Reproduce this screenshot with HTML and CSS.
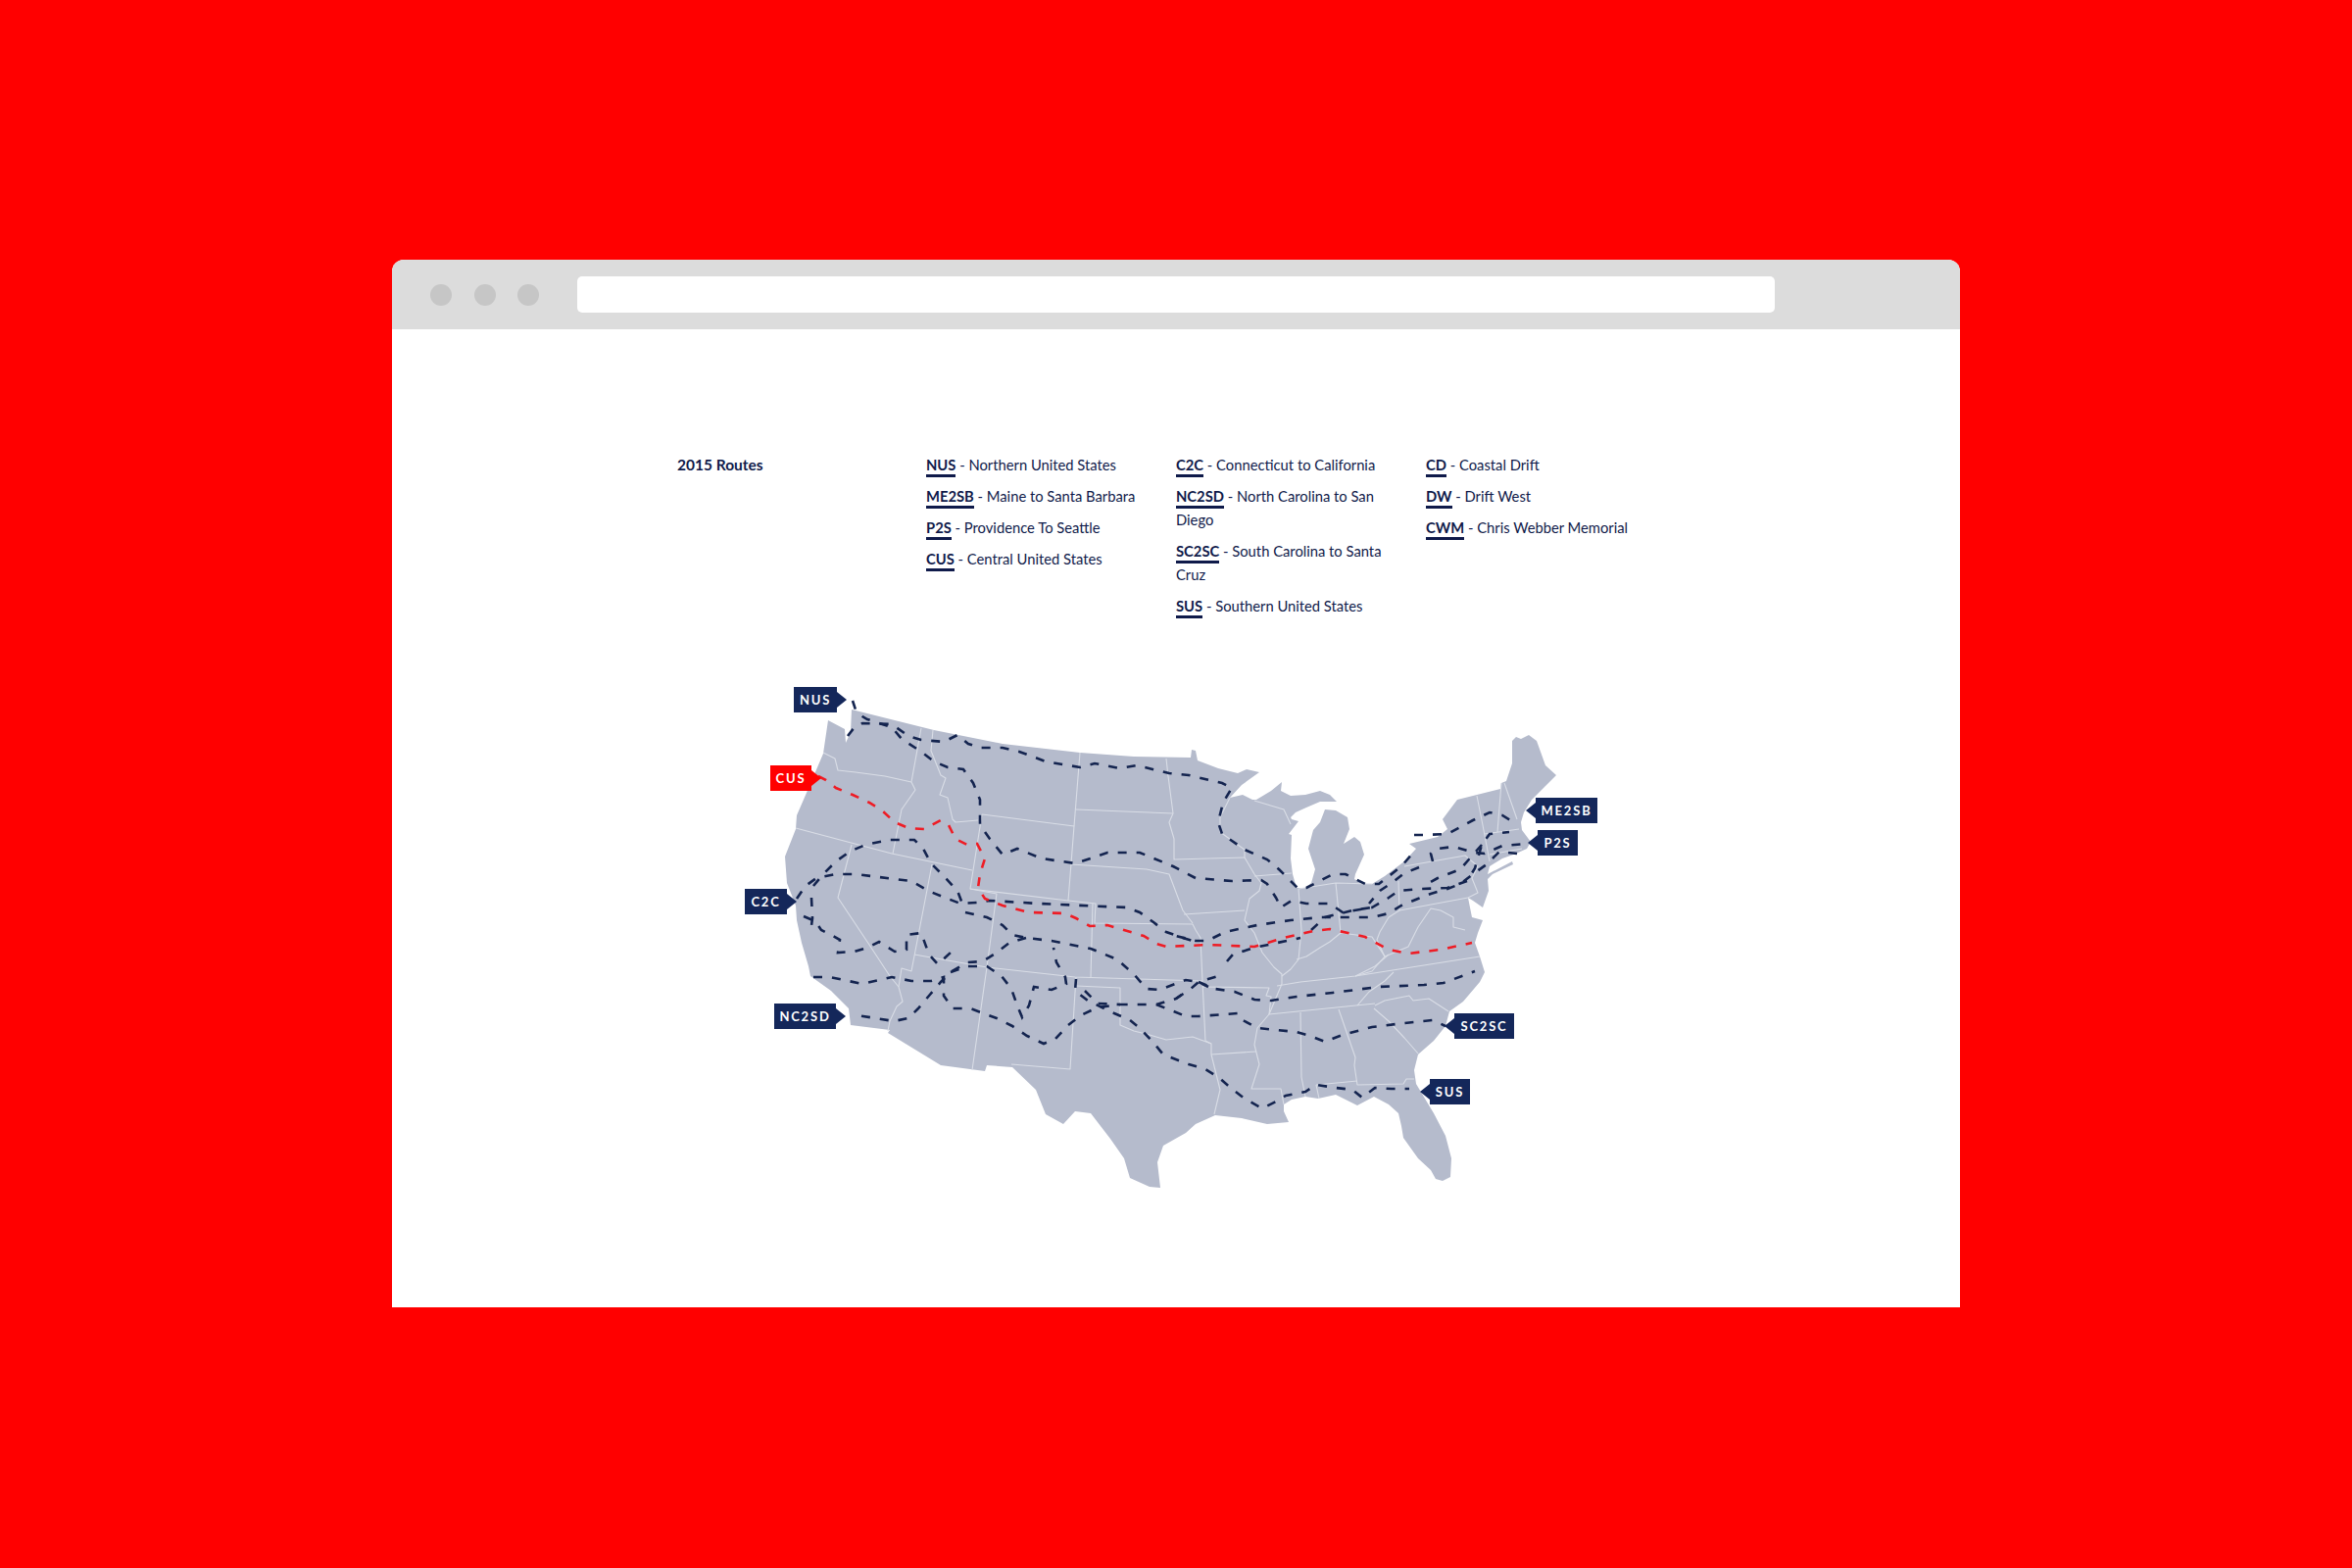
FILE: index.html
```html
<!DOCTYPE html>
<html lang="en">
<head>
    <meta charset="UTF-8">
    <meta name="viewport" content="width=device-width, initial-scale=1.0">
    <title>2015 Routes</title>
    <link rel="stylesheet" href="styles.css">
</head>
<body>

<div class="browser">
    <!-- Window toolbar -->
    <div class="toolbar">
        <div class="dots">
            <span class="dot"></span>
            <span class="dot"></span>
            <span class="dot"></span>
        </div>
        <div class="address-bar"></div>
    </div>

    <div class="page">
        <!-- Route legend -->
        <div class="legend">
            <h2 class="legend-title">2015 Routes</h2>
            <ul class="route-list">
                <li><b>NUS</b> - Northern United States</li>
                <li><b>ME2SB</b> - Maine to Santa Barbara</li>
                <li><b>P2S</b> - Providence To Seattle</li>
                <li><b>CUS</b> - Central United States</li>
            </ul>
            <ul class="route-list">
                <li><b>C2C</b> - Connecticut to California</li>
                <li><b>NC2SD</b> - North Carolina to San Diego</li>
                <li><b>SC2SC</b> - South Carolina to Santa Cruz</li>
                <li><b>SUS</b> - Southern United States</li>
            </ul>
            <ul class="route-list">
                <li><b>CD</b> - Coastal Drift</li>
                <li><b>DW</b> - Drift West</li>
                <li><b>CWM</b> - Chris Webber Memorial</li>
            </ul>
        </div>

        <!-- Map, coordinates are the ones of the full picture -->
        <div class="map">
            <svg class="map-svg" viewBox="740 690 920 550" width="920" height="550">
                <path class="land" d="M869 725 L953 746 L1023 760 L1102 769 L1157 773 L1215 774 L1216 766 L1220 767 L1222 777 L1243 785 L1263 790 L1272 786 L1285 789 L1267 802 L1255 815 L1268 812 L1278 817 L1282 817 L1297 808 L1308 799 L1307 808 L1317 813 L1332 812 L1347 808 L1357 812 L1364 819 L1347 819 L1333 825 L1322 830 L1317 835 L1318 837 L1325 839 L1315 852 L1318 853 L1317 877 L1319 893 L1323 907 L1332 907 L1338 902 L1342 888 L1335 867 L1340 848 L1347 840 L1352 827 L1363 828 L1375 835 L1377 847 L1371 862 L1382 855 L1388 860 L1392 873 L1383 893 L1382 898 L1392 903 L1400 903 L1413 895 L1433 880 L1445 867 L1438 862 L1467 855 L1477 847 L1472 837 L1487 817 L1507 812 L1531 806 L1532 800 L1537 798 L1543 780 L1543 757 L1547 753 L1552 755 L1560 751 L1568 757 L1577 782 L1588 792 L1577 803 L1563 817 L1555 830 L1552 840 L1553 848 L1562 860 L1558 867 L1547 872 L1533 877 L1520 885 L1518 893 L1543 880 L1544 883 L1523 893 L1518 898 L1519 910 L1513 927 L1503 920 L1498 917 L1502 937 L1513 940 L1508 953 L1505 963 L1510 977 L1515 993 L1510 1003 L1493 1023 L1479 1033 L1475 1048 L1463 1063 L1447 1077 L1443 1093 L1445 1107 L1463 1137 L1475 1160 L1481 1183 L1480 1202 L1472 1206 L1465 1204 L1460 1195 L1447 1183 L1432 1162 L1430 1150 L1427 1137 L1417 1128 L1402 1120 L1385 1129 L1363 1118 L1345 1122 L1332 1120 L1318 1123 L1310 1128 L1310 1135 L1315 1146 L1293 1148 L1267 1142 L1240 1139 L1220 1148 L1210 1157 L1187 1170 L1181 1187 L1184 1213 L1173 1212 L1153 1203 L1147 1183 L1133 1163 L1113 1137 L1097 1135 L1085 1148 L1067 1138 L1057 1113 L1033 1090 L1007 1088 L1005 1094 L960 1088 L906 1055 L908 1052 L868 1047 L866 1030 L848 1012 L827 997 L825 987 L818 963 L813 940 L812 925 L803 902 L801 875 L812 847 L813 833 L823 810 L840 770 L845 736 L862 745 L863 759 L868 748 Z"/>

                <g class="states">
                    <path d="M840 769 L852 775 L855 787 L873 789 L903 793 L930 799"/>
                    <path d="M940 744 L930 799 L934 807 L920 827 L911 872"/>
                    <path d="M812 846 L910 872 L992 889"/>
                    <path d="M869 863 L855 917 L887 965 L908 997 L917 1008 L921 1023 L915 1028 L908 1043 L906 1053"/>
                    <path d="M951 883 L930 992 L920 989 L917 1008"/>
                    <path d="M952 746 L950 767 L960 792 L965 795 L959 812 L967 815 L972 837 L975 840 L998 838"/>
                    <path d="M1002 832 L1096 844 L1090 920"/>
                    <path d="M1002 832 L990 908 L1090 920 L1118 923 L1117 943 L1217 944 L1220 950 L1225 958 L1227 1002"/>
                    <path d="M990 908 L1017 913 L1007 988 L992 1093"/>
                    <path d="M1102 769 L1096 844"/>
                    <path d="M1098 827 L1197 831"/>
                    <path d="M1190 775 L1192 793 L1197 831 L1193 840 L1198 857 L1198 878 L1270 876"/>
                    <path d="M1093 883 L1170 888 L1193 893 L1207 930 L1217 943"/>
                    <path d="M1208 934 L1270 930"/>
                    <path d="M1255 815 L1245 835 L1245 850 L1270 868 L1270 876 L1280 893 L1287 902 L1285 910 L1275 918 L1270 940 L1280 953 L1288 973 L1300 988 L1308 995 L1308 1005 L1295 1036"/>
                    <path d="M1280 895 L1318 892"/>
                    <path d="M1280 818 L1310 827 L1317 842"/>
                    <path d="M1325 908 L1363 902 L1400 903"/>
                    <path d="M1325 908 L1328 950 L1325 980 L1317 990 L1308 997"/>
                    <path d="M1363 902 L1368 953 L1357 962 L1347 968 L1333 977 L1323 980"/>
                    <path d="M1368 953 L1400 957 L1413 977 L1400 992 L1383 997"/>
                    <path d="M1427 900 L1428 930 L1417 937 L1408 952 L1405 960 L1413 977 L1423 973 L1437 967 L1447 947 L1460 928 L1470 930 L1483 937 L1483 947 L1495 950"/>
                    <path d="M1428 930 L1498 917"/>
                    <path d="M1433 885 L1495 874 L1508 885 L1502 897 L1508 912 L1498 917"/>
                    <path d="M1507 813 L1513 843 L1520 880"/>
                    <path d="M1532 800 L1528 850"/>
                    <path d="M1535 800 L1548 837"/>
                    <path d="M1515 852 L1550 847"/>
                    <path d="M1520 873 L1553 867"/>
                    <path d="M1303 1007 L1327 1003 L1383 997 L1510 977"/>
                    <path d="M1383 997 L1403 987 L1417 975"/>
                    <path d="M1422 993 L1413 1002 L1397 1013 L1385 1027"/>
                    <path d="M1295 1036 L1403 1025"/>
                    <path d="M1403 1027 L1413 1022 L1438 1017 L1442 1022 L1458 1020 L1478 1033"/>
                    <path d="M1402 1030 L1417 1043 L1433 1060 L1447 1076"/>
                    <path d="M1366 1031 L1383 1080 L1382 1088 L1385 1108 L1432 1107 L1435 1102 L1443 1102"/>
                    <path d="M1343 1108 L1385 1104"/>
                    <path d="M1343 1108 L1346 1122"/>
                    <path d="M1327 1034 L1328 1100 L1332 1120"/>
                    <path d="M1310 1128 L1307 1112 L1277 1112 L1285 1087 L1280 1067 L1283 1050 L1295 1036"/>
                    <path d="M1236 1077 L1282 1074"/>
                    <path d="M1227 1008 L1295 1009 L1292 1017 L1297 1018 L1295 1036"/>
                    <path d="M1227 1002 L1230 1063 L1236 1066 L1236 1077 L1245 1113 L1239 1138"/>
                    <path d="M1098 1007 L1143 1009 L1143 1047 L1157 1053 L1173 1057 L1190 1062 L1217 1059 L1236 1066"/>
                    <path d="M933 975 L1007 988 L1097 998 L1227 1002"/>
                    <path d="M1115 923 L1113 998"/>
                    <path d="M1098 998 L1092 1092 L1032 1087"/>
                </g>

                <g class="routes">
                    <path d="M870 716 L873 725 L880 732 L885 735 L910 743 L920 755 L940 768 L953 778 L967 784 L983 786 L993 800 L1000 817 L1000 843 L1010 857 L1023 873 L1038 867 L1063 877 L1097 882 L1113 877 L1130 871 L1163 871 L1197 885 L1220 897 L1257 900 L1287 899 L1293 903 L1302 917 L1307 927 L1318 920 L1333 923 L1357 923 L1370 932 L1400 927 L1417 917 L1427 910 L1450 908 L1477 907 L1497 900 L1505 887 L1512 863 L1520 852 L1540 850"/>
                    <path d="M865 752 L872 743 L880 739 L910 740 L927 752 L940 756 L963 758 L977 751 L988 760 L1000 764 L1023 764 L1040 768 L1067 778 L1102 784 L1117 780 L1143 785 L1160 782 L1193 790 L1213 792 L1247 800 L1257 805 L1248 820 L1243 840 L1247 852 L1270 868 L1293 878 L1305 888 L1317 900 L1325 908 L1333 907 L1360 893 L1373 893 L1393 903 L1407 903 L1430 885 L1443 870"/>
                    <path d="M1443 853 L1453 853 L1477 852 L1503 838 L1520 830 L1533 833 L1548 842"/>
                    <path d="M1462 880 L1460 872 L1467 867 L1483 865 L1505 871 L1515 872 L1533 864 L1558 862"/>
                    <path d="M1548 872 L1530 870 L1517 883 L1503 893 L1490 903 L1477 908 L1460 913 L1447 918 L1430 925 L1417 933 L1400 937 L1367 937 L1348 937 L1317 940 L1283 945 L1250 952 L1232 961 L1220 961 L1200 956"/>
                    <path d="M1512 863 L1490 888 L1467 897 L1453 905"/>
                    <path d="M1448 886 L1433 892 L1420 902 L1408 910 L1397 923"/>
                    <path d="M1338 950 L1352 937 L1380 930 L1400 927"/>
                    <path d="M813 918 L822 905 L833 897 L853 893 L873 893 L913 898 L930 900 L947 910 L967 918 L980 923 L997 922 L1010 920 L1060 923 L1150 927 L1163 932 L1177 942 L1190 952 L1207 958 L1220 962"/>
                    <path d="M830 905 L840 893 L853 880 L867 870 L883 863 L907 858 L933 858 L942 867 L950 882 L963 895 L977 910 L982 923"/>
                    <path d="M828 917 L829 938 L827 953"/>
                    <path d="M820 936 L832 941 L838 950 L850 956 L857 960 L855 973 L872 972 L885 968 L897 962 L913 972 L925 970 L925 955 L940 953 L948 975 L957 985 L970 973"/>
                    <path d="M985 932 L1007 937 L1023 945 L1033 955 L1047 958 L1073 961 L1113 969 L1140 980 L1157 995 L1170 1010 L1183 1011 L1210 1001 L1223 1003 L1233 1008"/>
                    <path d="M1047 958 L1030 963 L1017 973 L1003 982 L987 983 L970 993 L960 1003 L948 1017 L937 1030 L927 1040 L912 1043 L893 1040 L875 1037"/>
                    <path d="M970 993 L987 987 L1007 987 L1022 997 L1032 1010 L1038 1027 L1043 1039 L1050 1027 L1055 1008 L1073 1011 L1088 1005 L1087 998 L1078 983 L1075 968"/>
                    <path d="M830 998 L847 998 L880 1005 L910 998 L930 1002 L950 1002 L963 998 L963 1017 L972 1030 L990 1030 L1017 1040 L1033 1048 L1048 1058 L1065 1066 L1077 1061 L1090 1047 L1103 1037 L1120 1029 L1143 1026 L1180 1026 L1200 1020 L1213 1011"/>
                    <path d="M1098 1000 L1097 1012 L1110 1022 L1137 1035 L1153 1042 L1163 1050 L1177 1065 L1187 1077 L1213 1087 L1230 1092 L1243 1100 L1257 1112 L1270 1122 L1288 1132 L1302 1125 L1312 1119 L1332 1115 L1343 1108 L1363 1111 L1380 1113 L1390 1121 L1403 1111 L1420 1112 L1438 1112"/>
                    <path d="M1107 1012 L1120 1025 L1143 1026 M1180 1026 L1190 1030 L1210 1038 L1223 1038 L1263 1035 L1268 1042 L1283 1050 L1323 1054 L1337 1058 L1352 1064 L1370 1057 L1400 1049 L1433 1045 L1462 1042 L1475 1048"/>
                    <path d="M1200 1020 L1215 1010 L1223 1003 L1243 997"/>
                    <path d="M1252 982 L1258 975 L1280 968 L1327 958"/>
                    <path d="M1223 1003 L1240 1010 L1260 1013 L1280 1021 L1297 1022 L1323 1018 L1360 1014 L1407 1008 L1453 1006 L1473 1004 L1505 992"/>
                </g>

                <path class="route-red" d="M835 793 L843 797 L853 805 L870 812 L887 820 L900 828 L913 840 L927 846 L943 847 L960 838 L968 843 L975 857 L987 863 L997 862 L1005 877 L1000 893 L998 907 L1005 918 L1023 925 L1050 932 L1087 933 L1098 938 L1112 946 L1130 945 L1167 956 L1180 964 L1190 967 L1233 965 L1280 967 L1310 958 L1340 951 L1357 949 L1393 957 L1417 970 L1437 974 L1470 970 L1502 963"/>
            </svg>

            <!-- Route tags -->
            <span class="tag tag-right tag-nus">NUS</span>
            <span class="tag tag-right tag-red tag-cus">CUS</span>
            <span class="tag tag-right tag-c2c">C2C</span>
            <span class="tag tag-right tag-nc2sd">NC2SD</span>
            <span class="tag tag-left tag-me2sb">ME2SB</span>
            <span class="tag tag-left tag-p2s">P2S</span>
            <span class="tag tag-left tag-sc2sc">SC2SC</span>
            <span class="tag tag-left tag-sus">SUS</span>
        </div>
    </div>
</div>

</body>
</html>
```

FILE: styles.css
```css
body {
    margin: 0;
    padding: 265px 0 0;
    background-color: #ff0000;
    font-family: Lato, Arial, sans-serif;
    color: #0f1a4a;
}
.browser {
    width: 1600px;
    height: 1069px;
    margin: 0 auto;
    background-color: #ffffff;
    border-radius: 12px 12px 0 0;
    overflow: hidden;
}
.toolbar {
    height: 71px;
    padding: 17px 0 0 39px;
    box-sizing: border-box;
    background-color: #dcdcdc;
    display: flex;
    align-items: flex-start;
}
.dots {
    display: flex;
    gap: 22.5px;
    margin-top: 8px;
    margin-right: 39px;
}
.dot {
    width: 22px;
    height: 22px;
    border-radius: 50%;
    background-color: #c6c6c6;
}
.address-bar {
    width: 1222px;
    height: 37px;
    background-color: #ffffff;
    border-radius: 5px;
}
.page {
    padding-top: 126px;
}
.legend {
    display: grid;
    grid-template-columns: 254px repeat(3, 255px);
    margin-left: 291px;
    font-size: 14.75px;
    line-height: 24px;
}
.legend-title {
    margin: 0;
    font-size: 15.5px;
    font-weight: 700;
}
.route-list {
    margin: 0;
    padding: 0 28px 0 0;
    list-style: none;
}
.route-list li {
    margin-bottom: 8px;
}
.route-list b {
    font-weight: 700;
    border-bottom: 3px solid #0f1a4a;
    padding-bottom: 1px;
}
.map {
    position: relative;
    width: 920px;
    height: 550px;
    margin: 51px 0 0 340px;
}
.map-svg {
    display: block;
}
.land {
    fill: #b5bbcc;
}
.states path {
    fill: none;
    stroke: #d9dde6;
    stroke-width: 1.1;
    stroke-linejoin: round;
}
.routes path {
    fill: none;
    stroke: #14244f;
    stroke-width: 2.6;
    stroke-dasharray: 9 10;
}
.route-red {
    fill: none;
    stroke: #ee1c25;
    stroke-width: 2.6;
    stroke-dasharray: 9 10;
}

/* Tags sit on the map next to where each route starts */
.tag {
    position: absolute;
    height: 26px;
    line-height: 26px;
    text-align: center;
    background-color: #14275a;
    color: #ffffff;
    font-size: 13px;
    font-weight: 700;
    letter-spacing: 1.8px;
}
.tag::after {
    content: "";
    position: absolute;
    top: 5px;
    border-top: 8px solid transparent;
    border-bottom: 8px solid transparent;
}
.tag-right::after {
    left: 100%;
    border-left: 10px solid #14275a;
}
.tag-left::after {
    right: 100%;
    border-right: 10px solid #14275a;
}
.tag-red {
    background-color: #ff0000;
}
.tag-red::after {
    border-left-color: #ff0000;
}
.tag-nus { left: 70px; top: 12px; width: 44px; }
.tag-cus { left: 46px; top: 92px; width: 42px; }
.tag-c2c { left: 20px; top: 218px; width: 43px; }
.tag-nc2sd { left: 50px; top: 335px; width: 63px; }
.tag-me2sb { left: 827px; top: 125px; width: 63px; }
.tag-p2s { left: 829px; top: 158px; width: 41px; }
.tag-sc2sc { left: 744px; top: 345px; width: 61px; }
.tag-sus { left: 719px; top: 412px; width: 41px; }
```
